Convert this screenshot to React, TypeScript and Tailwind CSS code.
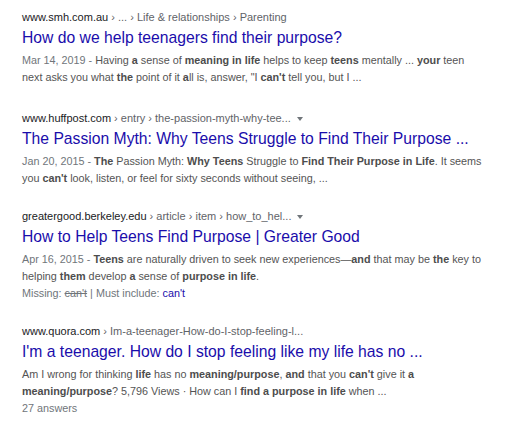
import type { ReactNode } from "react"

function B({ children }: { children: ReactNode }) {
  return <b className="font-bold text-[#4d4d4d]">{children}</b>
}

function Crumb({ site, path, arrow }: { site: string; path: string; arrow?: boolean }) {
  return (
    <div className="h-[20px] text-[11px] leading-[20px] whitespace-nowrap">
      <span className="text-[#202124]">{site}</span>
      <span className="text-[#5f6368]">{path}</span>
      {arrow && (
        <svg className="inline-block ml-[6px] align-middle" width="6" height="4" viewBox="0 0 6 4">
          <path d="M0 0h6L3 4z" fill="#70757a" />
        </svg>
      )}
    </div>
  )
}

function Title({ children }: { children: ReactNode }) {
  return (
    <div className="text-[15.7px] leading-[22px] text-[#1a0dab] whitespace-nowrap">{children}</div>
  )
}

function Snippet({ date, children }: { date?: string; children: ReactNode }) {
  return (
    <div className="text-[10.8px] leading-[17px] text-[#545454] mt-[3px] whitespace-nowrap">
      {date && <span className="text-[#70757a]">{date} - </span>}
      {children}
    </div>
  )
}

export default function App() {
  return (
    <div
      className="w-[517px] h-[431px] bg-white pl-[22px] pt-[7px] overflow-hidden"
      style={{ fontFamily: '"Liberation Sans", Arial, sans-serif' }}
    >
      {/* smh */}
      <div className="mb-[22px]">
        <Crumb site="www.smh.com.au" path=" › ... › Life & relationships › Parenting" />
        <Title>How do we help teenagers find their purpose?</Title>
        <Snippet date="Mar 14, 2019">
          Having <B>a</B> sense of <B>meaning in life</B> helps to keep <B>teens</B> mentally ... <B>your</B> teen
          <br />
          next asks you what <B>the</B> point of it <B>a</B>ll is, answer, "I <B>can't</B> tell you, but I ...
        </Snippet>
      </div>

      {/* huffpost */}
      <div className="mb-[19px]">
        <Crumb site="www.huffpost.com" path=" › entry › the-passion-myth-why-tee..." arrow />
        <Title>The Passion Myth: Why Teens Struggle to Find Their Purpose ...</Title>
        <Snippet date="Jan 20, 2015">
          <B>The</B> Passion Myth: <B>Why Teens</B> Struggle to <B>Find Their Purpose in Life</B>. It seems
          <br />
          you <B>can't</B> look, listen, or feel for sixty seconds without seeing, ...
        </Snippet>
      </div>

      {/* greater good */}
      <div className="mb-[19px]">
        <Crumb site="greatergood.berkeley.edu" path=" › article › item › how_to_hel..." arrow />
        <Title>How to Help Teens Find Purpose | Greater Good</Title>
        <Snippet date="Apr 16, 2015">
          <B>Teens</B> are naturally driven to seek new experiences—<B>and</B> that may be <B>the</B> key to
          <br />
          helping <B>them</B> develop <B>a</B> sense of <B>purpose in life</B>.
        </Snippet>
        <div className="text-[10.8px] leading-[17px] text-[#70757a]">
          Missing: <s>can't</s> | Must include: <span className="text-[#1a0dab]">can't</span>
        </div>
      </div>

      {/* quora */}
      <div>
        <Crumb site="www.quora.com" path=" › Im-a-teenager-How-do-I-stop-feeling-l..." />
        <Title>I'm a teenager. How do I stop feeling like my life has no ...</Title>
        <Snippet>
          Am I wrong for thinking <B>life</B> has no <B>meaning/purpose</B>, <B>and</B> that you <B>can't</B> give it{" "}
          <B>a</B>
          <br />
          <B>meaning/purpose</B>? 5,796 Views · How can I <B>find a purpose in life</B> when ...
        </Snippet>
        <div className="text-[10.8px] leading-[17px] text-[#70757a]">27 answers</div>
      </div>
    </div>
  )
}
